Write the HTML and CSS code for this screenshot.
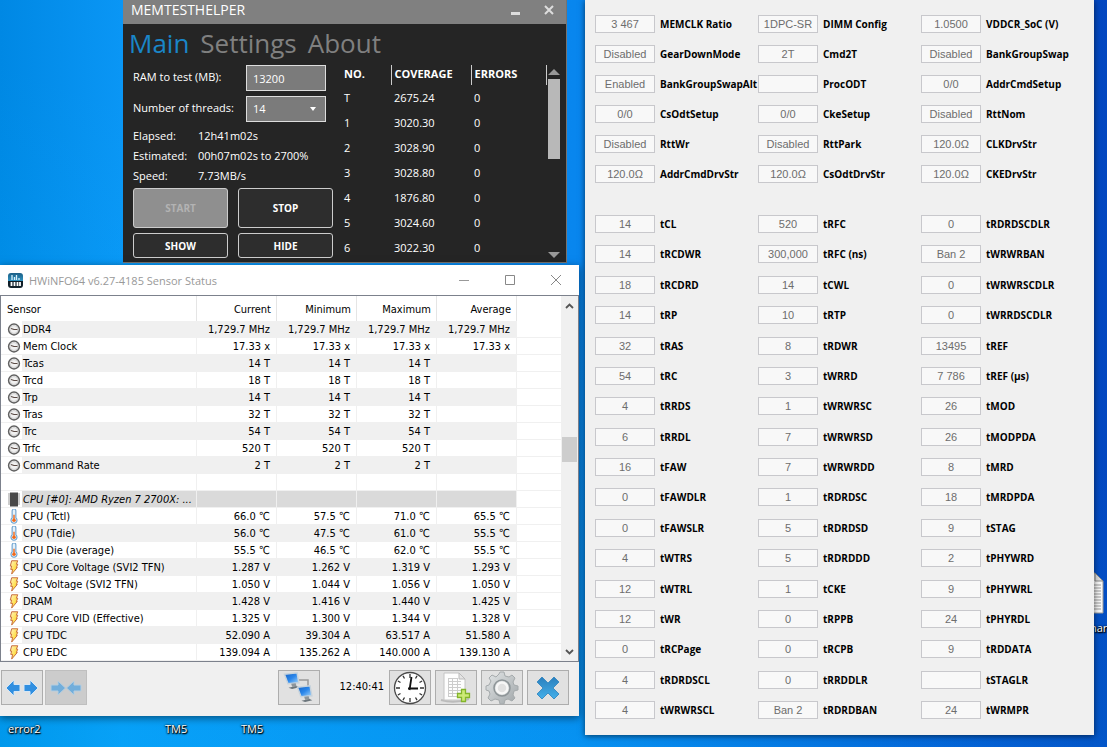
FILE: index.html
```html
<!DOCTYPE html>
<html lang="en">
<head>
<meta charset="utf-8">
<title>Desktop</title>
<link rel="stylesheet" href="styles.css">
</head>
<body>
<svg class="defs" aria-hidden="true">
  <defs>
    <linearGradient id="boltFill" x1="0" y1="0" x2="1" y2="1"><stop offset="0" stop-color="#fff3c4"/><stop offset="1" stop-color="#ffd400"/></linearGradient>
    <linearGradient id="screenFill" x1="0" y1="0" x2="1" y2="1"><stop offset="0" stop-color="#1662c4"/><stop offset=".5" stop-color="#2a86ea"/><stop offset="1" stop-color="#a8d8fb"/></linearGradient>
    <linearGradient id="crossFill" x1="0" y1="0" x2="0" y2="1"><stop offset="0" stop-color="#2a7fbd"/><stop offset="1" stop-color="#45b0ea"/></linearGradient>
    <linearGradient id="gearFill" x1="0" y1="0" x2="1" y2="1"><stop offset="0" stop-color="#e4e7e8"/><stop offset="1" stop-color="#9fa5a8"/></linearGradient>
    <linearGradient id="logoFill" x1="0" y1="0" x2="0" y2="1"><stop offset="0" stop-color="#1c5f86"/><stop offset=".5" stop-color="#2e8fbd"/><stop offset=".52" stop-color="#0c1a24"/><stop offset="1" stop-color="#14242e"/></linearGradient>
  </defs>
  <symbol id="clock" viewBox="0 0 14 14"><circle cx="7" cy="7" r="5.400" fill="#f1f1f1" stroke="#606060" stroke-width="1.500"/><circle cx="7" cy="7" r="4" fill="none" stroke="#c9c9c9" stroke-width=".8"/><path d="M4 6l3 1h3.500" fill="none" stroke="#5a4a44" stroke-width="1.100"/></symbol>
  <symbol id="chip" viewBox="0 0 14 14"><path d="M1 1.500h12M1 3.500h12M1 5.500h12M1 7.500h12M1 9.500h12M1 11.500h12" stroke="#999"/><rect x="3" y="0" width="8" height="14" fill="#484848"/></symbol>
  <symbol id="temp" viewBox="0 0 14 16"><path d="M5 2a2 2 0 0 1 4 0v7.500a3.200 3.200 0 1 1-4 0z" fill="#e5f2fb" stroke="#6ea3cf" stroke-width="1.200"/><path d="M7 6v6" stroke="#f26a1b" stroke-width="1.500"/><circle cx="7" cy="12" r="1.900" fill="#f26a1b"/></symbol>
  <symbol id="bolt" viewBox="0 0 14 16"><path d="M4.500.8h6.500L9.500 4.500h1.500L9.500 8h1L4.500 15l1-5H3.500l1-3.500H3z" fill="url(#boltFill)" stroke="#c4673a" stroke-width="1"/></symbol>
  <symbol id="monitor" viewBox="0 0 22 20"><path d="M1.500 2.500l14-1.500 2 11-12 1z" fill="url(#screenFill)" stroke="#c7d3dc" stroke-width="1.600"/><path d="M9 13l5-.4 1 3.400-5 .5z" fill="#8d969c"/><path d="M6 17.500l9-2 3 1.500-8 2z" fill="#6b757b"/></symbol>
</svg>

<main class="desktop">
  <span class="shortcut shortcut-error">error2</span>
  <span class="shortcut shortcut-tm-a">TM5</span>
  <span class="shortcut shortcut-tm-b">TM5</span>
  <div class="document">
    <svg width="34" height="42" viewBox="0 0 34 42"><path d="M1 1h24l8 8v32H1z" fill="#f7f7f7" stroke="#9a9a9a"/><path d="M25 1v8h8z" fill="#ddd" stroke="#8a8a8a"/><path d="M5 13h26M5 16h26M5 19h26M5 22h26M5 25h26M5 28h26M5 31h26M5 34h26M5 37h26" stroke="#9b9b9b"/></svg>
  </div>
  <span class="shortcut shortcut-doc">nar</span>

  <section class="memtest" aria-label="MemTestHelper">
    <header class="mt-title">
      <span>MEMTESTHELPER</span>
      <div class="mt-controls">
        <button type="button" aria-label="Minimize"><svg width="10" height="10" viewBox="0 0 10 10"><path d="M0 8.500h9" stroke="#ddd" stroke-width="3"/></svg></button>
        <button type="button" aria-label="Close"><svg width="10" height="10" viewBox="0 0 10 10"><path d="M1 1l8 8M9 1l-8 8" stroke="#ddd" stroke-width="2"/></svg></button>
      </div>
    </header>
    <nav class="mt-tabs">
      <button type="button" class="active">Main</button>
      <button type="button">Settings</button>
      <button type="button">About</button>
    </nav>
    <div class="mt-body">
      <form class="mt-form">
        <div class="mt-row"><label for="ram">RAM to test (MB):</label><input id="ram" type="text" value="13200"></div>
        <div class="mt-row"><label for="threads">Number of threads:</label>
          <div class="select-wrap"><select id="threads"><option>14</option></select><svg width="6" height="4" viewBox="0 0 6 4"><path d="M0 0h6L3 4z" fill="#fff"/></svg></div>
        </div>
        <dl class="mt-stats">
          <dt>Elapsed:</dt><dd>12h41m02s</dd>
          <dt>Estimated:</dt><dd>00h07m02s to 2700%</dd>
          <dt>Speed:</dt><dd>7.73MB/s</dd>
        </dl>
        <div class="mt-buttons">
          <button type="button" disabled>START</button>
          <button type="button">STOP</button>
          <button type="button">SHOW</button>
          <button type="button">HIDE</button>
        </div>
      </form>
      <table class="mt-table">
        <thead><tr><th class="no">NO.</th><th class="coverage">COVERAGE</th><th>ERRORS</th></tr></thead>
        <tbody>
          <tr><td>T</td><td>2675.24</td><td>0</td></tr>
          <tr><td>1</td><td>3020.30</td><td>0</td></tr>
          <tr><td>2</td><td>3028.90</td><td>0</td></tr>
          <tr><td>3</td><td>3028.80</td><td>0</td></tr>
          <tr><td>4</td><td>1876.80</td><td>0</td></tr>
          <tr><td>5</td><td>3024.60</td><td>0</td></tr>
          <tr><td>6</td><td>3022.30</td><td>0</td></tr>
        </tbody>
      </table>
      <div class="mt-scroll">
        <svg width="12" height="6" viewBox="0 0 12 6"><path d="M0 6h12L6 0z" fill="#999"/></svg>
        <div class="mt-thumb"></div>
        <svg width="12" height="6" viewBox="0 0 12 6"><path d="M0 0h12L6 6z" fill="#999"/></svg>
      </div>
    </div>
  </section>

  <section class="hwinfo" aria-label="HWiNFO64">
    <header class="hw-title">
      <svg width="15" height="15" viewBox="0 0 15 15"><rect width="15" height="15" rx="3" fill="url(#logoFill)"/><path d="M4 2v5M6.500 4v3M8.500 2v5M11 5v2" stroke="#d8f0fb" stroke-width="1.300"/><path d="M3.500 9v4M6.500 9v4M9.500 9v4M12 9v4" stroke="#fff" stroke-width="1.800"/></svg>
      <span>HWiNFO64 v6.27-4185 Sensor Status</span>
      <div class="hw-controls">
        <button type="button" aria-label="Minimize"><svg width="12" height="12" viewBox="0 0 12 12"><path d="M1 6.500h10" stroke="#999"/></svg></button>
        <button type="button" aria-label="Maximize"><svg width="12" height="12" viewBox="0 0 12 12"><path d="M1.500 1.500h9v9h-9z" fill="none" stroke="#888"/></svg></button>
        <button type="button" aria-label="Close"><svg width="12" height="12" viewBox="0 0 12 12"><path d="M1 1l10 10M11 1L1 11" stroke="#888"/></svg></button>
      </div>
    </header>
    <div class="hw-list">
      <table class="hw-table">
        <colgroup><col class="c-icon"><col class="c-name"><col class="c-val"><col class="c-val"><col class="c-val"><col class="c-val"><col></colgroup>
        <thead><tr><th colspan="2">Sensor</th><th>Current</th><th>Minimum</th><th>Maximum</th><th>Average</th><th></th></tr></thead>
        <tbody>
          <tr><td><svg><use href="#clock"/></svg></td><td>DDR4</td><td>1,729.7 MHz</td><td>1,729.7 MHz</td><td>1,729.7 MHz</td><td>1,729.7 MHz</td><td></td></tr>
          <tr><td><svg><use href="#clock"/></svg></td><td>Mem Clock</td><td>17.33 x</td><td>17.33 x</td><td>17.33 x</td><td>17.33 x</td><td></td></tr>
          <tr><td><svg><use href="#clock"/></svg></td><td>Tcas</td><td>14 T</td><td>14 T</td><td>14 T</td><td></td><td></td></tr>
          <tr><td><svg><use href="#clock"/></svg></td><td>Trcd</td><td>18 T</td><td>18 T</td><td>18 T</td><td></td><td></td></tr>
          <tr><td><svg><use href="#clock"/></svg></td><td>Trp</td><td>14 T</td><td>14 T</td><td>14 T</td><td></td><td></td></tr>
          <tr><td><svg><use href="#clock"/></svg></td><td>Tras</td><td>32 T</td><td>32 T</td><td>32 T</td><td></td><td></td></tr>
          <tr><td><svg><use href="#clock"/></svg></td><td>Trc</td><td>54 T</td><td>54 T</td><td>54 T</td><td></td><td></td></tr>
          <tr><td><svg><use href="#clock"/></svg></td><td>Trfc</td><td>520 T</td><td>520 T</td><td>520 T</td><td></td><td></td></tr>
          <tr><td><svg><use href="#clock"/></svg></td><td>Command Rate</td><td>2 T</td><td>2 T</td><td>2 T</td><td></td><td></td></tr>
          <tr><td></td><td></td><td></td><td></td><td></td><td></td><td></td></tr>
          <tr class="group"><td><svg><use href="#chip"/></svg></td><td>CPU [#0]: AMD Ryzen 7 2700X: ...</td><td></td><td></td><td></td><td></td><td></td></tr>
          <tr><td><svg><use href="#temp"/></svg></td><td>CPU (Tctl)</td><td>66.0 ℃</td><td>57.5 ℃</td><td>71.0 ℃</td><td>65.5 ℃</td><td></td></tr>
          <tr><td><svg><use href="#temp"/></svg></td><td>CPU (Tdie)</td><td>56.0 ℃</td><td>47.5 ℃</td><td>61.0 ℃</td><td>55.5 ℃</td><td></td></tr>
          <tr><td><svg><use href="#temp"/></svg></td><td>CPU Die (average)</td><td>55.5 ℃</td><td>46.5 ℃</td><td>62.0 ℃</td><td>55.5 ℃</td><td></td></tr>
          <tr><td><svg><use href="#bolt"/></svg></td><td>CPU Core Voltage (SVI2 TFN)</td><td>1.287 V</td><td>1.262 V</td><td>1.319 V</td><td>1.293 V</td><td></td></tr>
          <tr><td><svg><use href="#bolt"/></svg></td><td>SoC Voltage (SVI2 TFN)</td><td>1.050 V</td><td>1.044 V</td><td>1.056 V</td><td>1.050 V</td><td></td></tr>
          <tr><td><svg><use href="#bolt"/></svg></td><td>DRAM</td><td>1.428 V</td><td>1.416 V</td><td>1.440 V</td><td>1.425 V</td><td></td></tr>
          <tr><td><svg><use href="#bolt"/></svg></td><td>CPU Core VID (Effective)</td><td>1.325 V</td><td>1.300 V</td><td>1.344 V</td><td>1.328 V</td><td></td></tr>
          <tr><td><svg><use href="#bolt"/></svg></td><td>CPU TDC</td><td>52.090 A</td><td>39.304 A</td><td>63.517 A</td><td>51.580 A</td><td></td></tr>
          <tr><td><svg><use href="#bolt"/></svg></td><td>CPU EDC</td><td>139.094 A</td><td>135.262 A</td><td>140.000 A</td><td>139.130 A</td><td></td></tr>
        </tbody>
      </table>
      <div class="hw-scroll">
        <svg width="9" height="6" viewBox="0 0 9 6"><path d="M1 5l3.500-3.500L8 5" fill="none" stroke="#555" stroke-width="1.800"/></svg>
        <div class="hw-track"><div class="hw-thumb"></div></div>
        <svg width="9" height="6" viewBox="0 0 9 6"><path d="M1 1l3.500 3.500L8 1" fill="none" stroke="#555" stroke-width="1.800"/></svg>
      </div>
    </div>
    <footer class="hw-tools">
      <div class="hw-pair">
        <button type="button" aria-label="Expand"><svg width="34" height="20" viewBox="0 0 34 20"><path d="M1 10l8-8v4.500h6v7H9V18zM33 10l-8-8v4.500h-6v7h6V18z" fill="#318fe0" stroke="#d5e6f5"/></svg></button>
        <button type="button" class="dim" aria-label="Shrink"><svg width="32" height="20" viewBox="0 0 32 20"><path d="M15.500 10L8 3v4H1v6h7v4zM16.500 10L24 3v4h7v6h-7v4z" fill="#72aedb" stroke="#b5cee0"/></svg></button>
      </div>
      <span class="spacer"></span>
      <button type="button" aria-label="Remote"><svg width="34" height="32" viewBox="0 0 34 32"><path d="M17 8h9v8" fill="none" stroke="#999" stroke-width="1.500"/><use href="#monitor" width="20" height="18" x="1" y="0"/><use href="#monitor" width="20" height="18" x="14" y="13"/></svg></button>
      <time>12:40:41</time>
      <button type="button" aria-label="Reset clock"><svg width="34" height="34" viewBox="0 0 34 34"><circle cx="17" cy="17" r="15.500" fill="#fff" stroke="#4a4a4a" stroke-width="1.300"/><path d="M17 3v4M17 27v4M3 17h4M27 17h4M10 4.900l1.500 2.600M22.500 26.500l1.500 2.600M4.900 10l2.600 1.500M26.500 22.500l2.600 1.500M24 4.900l-1.500 2.600M11.500 26.500L10 29.100M29.100 10l-2.600 1.500M7.500 22.500l-2.600 1.500" stroke="#333" stroke-width="1.300"/><path d="M16.500 19l2-13M15 17.500h10" stroke="#111" stroke-width="1.800"/></svg></button>
      <button type="button" aria-label="Log"><svg width="34" height="34" viewBox="0 0 34 34"><path d="M2 29q13 4 28-1" fill="none" stroke="#bbb" stroke-width="2"/><path d="M5 2h15l6 6v21H5z" fill="#fdfdfd" stroke="#c4c4c4"/><path d="M20 2v6h6z" fill="#e5e5e5" stroke="#bbb"/><path d="M9 7.500h9M9 10.500h13M9 13.500h13M9 16.500h13M9 19.500h13M9 22.500h10M9 25.500h10M9.500 7v19M13.500 7v19M18.500 7v19" stroke="#ccc" fill="none"/><path d="M22.500 18.500h4v4h4v4h-4v4h-4v-4h-4v-4h4z" fill="#cdea78" stroke="#83b52b" stroke-width="1.300"/></svg></button>
      <button type="button" aria-label="Settings"><svg width="34" height="34" viewBox="0 0 34 34"><path d="M14 3l1-2h4l1 4 4 1 3-2 3 3-2 4 1 3 4 1v4l-4 1-1 4 2 3-3 3-4-2-3 1-1 4h-4l-1-4-4-1-4 2-3-3 2-4-1-3-3-1v-4l3-1 2-4-2-3 3-3 4 2z" fill="url(#gearFill)" stroke="#a5aaac"/><circle cx="17" cy="17" r="8" fill="none" stroke="#8d9497" stroke-width="1.500"/><circle cx="17" cy="17" r="5.500" fill="#e1e1e1" stroke="#f7f7f7" stroke-width="2.500"/></svg></button>
      <button type="button" aria-label="Close sensors"><svg width="26" height="26" viewBox="0 0 26 26"><path d="M7 2l6 6 6-6 5 5-6 6 6 6-5 5-6-6-6 6-5-5 6-6-6-6z" fill="url(#crossFill)" stroke="#2c82bd" stroke-width=".8"/></svg></button>
    </footer>
  </section>

  <section class="timings" aria-label="Memory timings">
    <div class="grid config">
      <label><input readonly value="3 467"><span>MEMCLK Ratio</span></label>
      <label><input readonly value="1DPC-SR"><span>DIMM Config</span></label>
      <label><input readonly value="1.0500"><span>VDDCR_SoC (V)</span></label>
      <label><input readonly value="Disabled"><span>GearDownMode</span></label>
      <label><input readonly value="2T"><span>Cmd2T</span></label>
      <label><input readonly value="Disabled"><span>BankGroupSwap</span></label>
      <label><input readonly value="Enabled"><span>BankGroupSwapAlt</span></label>
      <label><input readonly value=""><span>ProcODT</span></label>
      <label><input readonly value="0/0"><span>AddrCmdSetup</span></label>
      <label><input readonly value="0/0"><span>CsOdtSetup</span></label>
      <label><input readonly value="0/0"><span>CkeSetup</span></label>
      <label><input readonly value="Disabled"><span>RttNom</span></label>
      <label><input readonly value="Disabled"><span>RttWr</span></label>
      <label><input readonly value="Disabled"><span>RttPark</span></label>
      <label><input readonly value="120.0Ω"><span>CLKDrvStr</span></label>
      <label><input readonly value="120.0Ω"><span>AddrCmdDrvStr</span></label>
      <label><input readonly value="120.0Ω"><span>CsOdtDrvStr</span></label>
      <label><input readonly value="120.0Ω"><span>CKEDrvStr</span></label>
    </div>
    <div class="grid values">
      <label><input readonly value="14"><span>tCL</span></label>
      <label><input readonly value="520"><span>tRFC</span></label>
      <label><input readonly value="0"><span>tRDRDSCDLR</span></label>
      <label><input readonly value="14"><span>tRCDWR</span></label>
      <label><input readonly value="300,000"><span>tRFC (ns)</span></label>
      <label><input readonly value="Ban 2"><span>tWRWRBAN</span></label>
      <label><input readonly value="18"><span>tRCDRD</span></label>
      <label><input readonly value="14"><span>tCWL</span></label>
      <label><input readonly value="0"><span>tWRWRSCDLR</span></label>
      <label><input readonly value="14"><span>tRP</span></label>
      <label><input readonly value="10"><span>tRTP</span></label>
      <label><input readonly value="0"><span>tWRRDSCDLR</span></label>
      <label><input readonly value="32"><span>tRAS</span></label>
      <label><input readonly value="8"><span>tRDWR</span></label>
      <label><input readonly value="13495"><span>tREF</span></label>
      <label><input readonly value="54"><span>tRC</span></label>
      <label><input readonly value="3"><span>tWRRD</span></label>
      <label><input readonly value="7 786"><span>tREF (µs)</span></label>
      <label><input readonly value="4"><span>tRRDS</span></label>
      <label><input readonly value="1"><span>tWRWRSC</span></label>
      <label><input readonly value="26"><span>tMOD</span></label>
      <label><input readonly value="6"><span>tRRDL</span></label>
      <label><input readonly value="7"><span>tWRWRSD</span></label>
      <label><input readonly value="26"><span>tMODPDA</span></label>
      <label><input readonly value="16"><span>tFAW</span></label>
      <label><input readonly value="7"><span>tWRWRDD</span></label>
      <label><input readonly value="8"><span>tMRD</span></label>
      <label><input readonly value="0"><span>tFAWDLR</span></label>
      <label><input readonly value="1"><span>tRDRDSC</span></label>
      <label><input readonly value="18"><span>tMRDPDA</span></label>
      <label><input readonly value="0"><span>tFAWSLR</span></label>
      <label><input readonly value="5"><span>tRDRDSD</span></label>
      <label><input readonly value="9"><span>tSTAG</span></label>
      <label><input readonly value="4"><span>tWTRS</span></label>
      <label><input readonly value="5"><span>tRDRDDD</span></label>
      <label><input readonly value="2"><span>tPHYWRD</span></label>
      <label><input readonly value="12"><span>tWTRL</span></label>
      <label><input readonly value="1"><span>tCKE</span></label>
      <label><input readonly value="9"><span>tPHYWRL</span></label>
      <label><input readonly value="12"><span>tWR</span></label>
      <label><input readonly value="0"><span>tRPPB</span></label>
      <label><input readonly value="24"><span>tPHYRDL</span></label>
      <label><input readonly value="0"><span>tRCPage</span></label>
      <label><input readonly value="0"><span>tRCPB</span></label>
      <label><input readonly value="9"><span>tRDDATA</span></label>
      <label><input readonly value="4"><span>tRDRDSCL</span></label>
      <label><input readonly value="0"><span>tRRDDLR</span></label>
      <label><input readonly value=""><span>tSTAGLR</span></label>
      <label><input readonly value="4"><span>tWRWRSCL</span></label>
      <label><input readonly value="Ban 2"><span>tRDRDBAN</span></label>
      <label><input readonly value="24"><span>tWRMPR</span></label>
    </div>
  </section>
</main>
</body>
</html>
```
FILE: styles.css
```css
* { box-sizing: border-box; }
html, body { height: 100%; }
body { margin: 0; font-family: "Open Sans", "Noto Sans", sans-serif; font-size: 11px; }
button, input, select { font: inherit; margin: 0; padding: 0; border: 0; background: none; color: inherit; }
svg { display: block; flex: none; }
.defs { position: absolute; width: 0; height: 0; }

.desktop {
  position: relative;
  height: 100%;
  overflow: hidden;
  background:
    linear-gradient(200deg, transparent 40%, rgba(0, 190, 255, .3) 100%),
    linear-gradient(90deg, #0088e4 0, #0a96f5 11%, #0886ee 52%, #0450cc 90%, #0347c0 100%);
}

/* Desktop shortcuts */
.shortcut { position: absolute; color: #fff; line-height: 16px; text-shadow: 1px 1px 1px #000, 0 0 2px #000, 0 1px 2px #000; }
.shortcut-error { left: 8px; top: 721px; }
.shortcut-tm-a { left: 165px; top: 721px; }
.shortcut-tm-b { left: 241px; top: 721px; }
.shortcut-doc { left: 1090px; top: 620px; }
.document { position: absolute; left: 1070px; top: 572px; }

/* MemTestHelper */
.memtest {
  position: absolute; left: 123px; top: 0; width: 444px; height: 263px;
  display: flex; flex-direction: column;
  background: #252525; color: #fff;
  border: 1px solid #77736f; border-width: 0 1px 1px 0;
}
.mt-title { height: 24px; padding: 0 12px 5px 8px; display: flex; align-items: center; justify-content: space-between; background: #808080; font-size: 14px; line-height: 18px; }
.mt-controls { display: flex; gap: 23px; }
.mt-tabs { display: flex; gap: 11px; padding: 2px 6px 0; height: 41px; }
.mt-tabs button { font-size: 26px; line-height: 34px; height: 34px; color: #808080; }
.mt-tabs .active { color: #1a86c8; }
.mt-body { flex: 1; min-height: 0; display: flex; }
.mt-form { width: 203px; margin: 0 8px 0 10px; }
.mt-row { display: flex; justify-content: space-between; width: 193px; height: 26px; margin-bottom: 5px; line-height: 24px; }
.mt-row input, .mt-row select { width: 80px; height: 26px; padding: 0 6px; background: #7b7b7b; border: 1px solid #ddd; appearance: none; border-radius: 0; color: #fff; }
.select-wrap { position: relative; }
.select-wrap svg { position: absolute; right: 10px; top: 11px; pointer-events: none; }
.mt-stats { margin: 0 0 1px; display: grid; grid-template-columns: 65px 1fr; grid-auto-rows: 20px; line-height: 18px; white-space: nowrap; }
.mt-stats dd { margin: 0; }
.mt-buttons { display: grid; grid-template-columns: 95px 95px; gap: 5px 10px; grid-template-rows: 40px 25px; }
.mt-buttons button { border: 1px solid #ccc; border-radius: 3px; background: #2d2d2d; font-size: 10px; font-weight: 700; }
.mt-buttons button:disabled { background: #8f8f8f; color: #b3b3b3; }
.mt-table { width: 203px; height: 0; border-collapse: collapse; table-layout: fixed; }
.mt-table th, .mt-table td { padding: 0 0 0 3px; text-align: left; font-weight: 400; height: 25px; line-height: 17px; }
.mt-table th { height: 20px; padding-bottom: 3px; font-weight: 700; border-right: 1px solid #ccc; }
.mt-table .no { width: 47px; padding-left: 0; }
.mt-table .coverage { width: 80px; }
.mt-table td:first-child { padding-left: 0; }
.mt-scroll { display: flex; flex-direction: column; padding: 4px 0 4px 1px; }
.mt-thumb { width: 12px; height: 80px; margin: 4px 0 auto; background: #b8b8b8; }

/* HWiNFO64 */
.hwinfo {
  position: absolute; left: 0; top: 265px; width: 579px;
  background: #f0f0f0; color: #000; box-shadow: 0 2px 8px rgba(0, 0, 0, .5);
}
.hw-title { height: 30px; display: flex; align-items: center; gap: 6px; padding: 0 17px 0 8px; background: #fff; color: #999; }
.hw-controls { margin-left: auto; display: flex; gap: 34px; }
.hw-list { display: flex; border: 1px solid #7c818c; background: #fff; }
.hw-table { flex: 1; border-collapse: separate; border-spacing: 0; table-layout: fixed; font-family: "DejaVu Sans Condensed", "DejaVu Sans", sans-serif; }
.c-icon { width: 21px; }
.c-name { width: 175px; }
.c-val { width: 80px; }
.hw-table th { height: 25px; padding: 1px 5px 0 6px; font-weight: 400; text-align: right; border-right: 1px solid #e5e5e5; }
.hw-table th:first-child { text-align: left; }
.hw-table th:last-child { border: 0; }
.hw-table td { height: 17px; padding: 1px 6px 0 0; line-height: 15px; text-align: right; white-space: nowrap; border-right: 1px solid #f0f0f0; border-bottom: 1px solid #f0f0f0; }
.hw-table td:first-child { padding: 0 0 0 6px; }
.hw-table td:nth-child(2) { padding: 1px 0 0 1px; text-align: left; }
.hw-table tbody tr:nth-child(odd) td { background: #f0f0f0; }
.hw-table tbody tr.group td { background: #dadada; font-style: italic; }
.hw-table tbody tr td:first-child, .hw-table tbody tr td:last-child,
.hw-table tbody tr.group td:first-child, .hw-table tbody tr.group td:last-child { background: #fff; border-right: 0; }
.hw-table td svg { width: 14px; height: 15px; }
.hw-scroll { width: 17px; display: flex; flex-direction: column; align-items: center; padding: 7px 0 6px; background: #f0f0f0; }
.hw-track { flex: 1; width: 15px; display: flex; flex-direction: column; }
.hw-thumb { height: 25px; margin-top: 128px; background: #cdcdcd; }
.hw-tools { display: flex; align-items: center; gap: 4px; padding: 8px 10px 11px 1px; font-family: "DejaVu Sans Condensed", "DejaVu Sans", sans-serif; }
.hw-pair { display: flex; gap: 2px; }
.hw-tools button { width: 42px; height: 35px; display: flex; align-items: center; justify-content: center; background: #e1e1e1; border: 1px solid #adadad; }
.hw-tools .dim { background: #ccc; border-color: #bfbfbf; }
.hw-tools time { padding: 0 1px 3px 16px; }
.spacer { flex: 1; }

/* Timings panel */
.timings {
  position: absolute; left: 585px; top: 0; bottom: 12px; width: 509px;
  display: flex; flex-direction: column; gap: 32px; padding: 15px 10px 16px;
  background: #f0f0f0; color: #000; box-shadow: 0 1px 6px rgba(0, 0, 0, .6);
}
.grid { display: grid; grid-template-columns: repeat(3, 1fr); row-gap: 12px; }
.values { flex: 1; row-gap: 0; align-content: space-between; }
.grid label { display: flex; align-items: center; gap: 5px; height: 18px; white-space: nowrap; font-size: 10px; font-weight: 700; }
.grid input { width: 60px; height: 18px; flex: none; border: 1px solid #c8c8cc; background: #f8f8f8; color: #6d6d6d; text-align: center; font: 11px "Liberation Sans", Arial, sans-serif; }
```
